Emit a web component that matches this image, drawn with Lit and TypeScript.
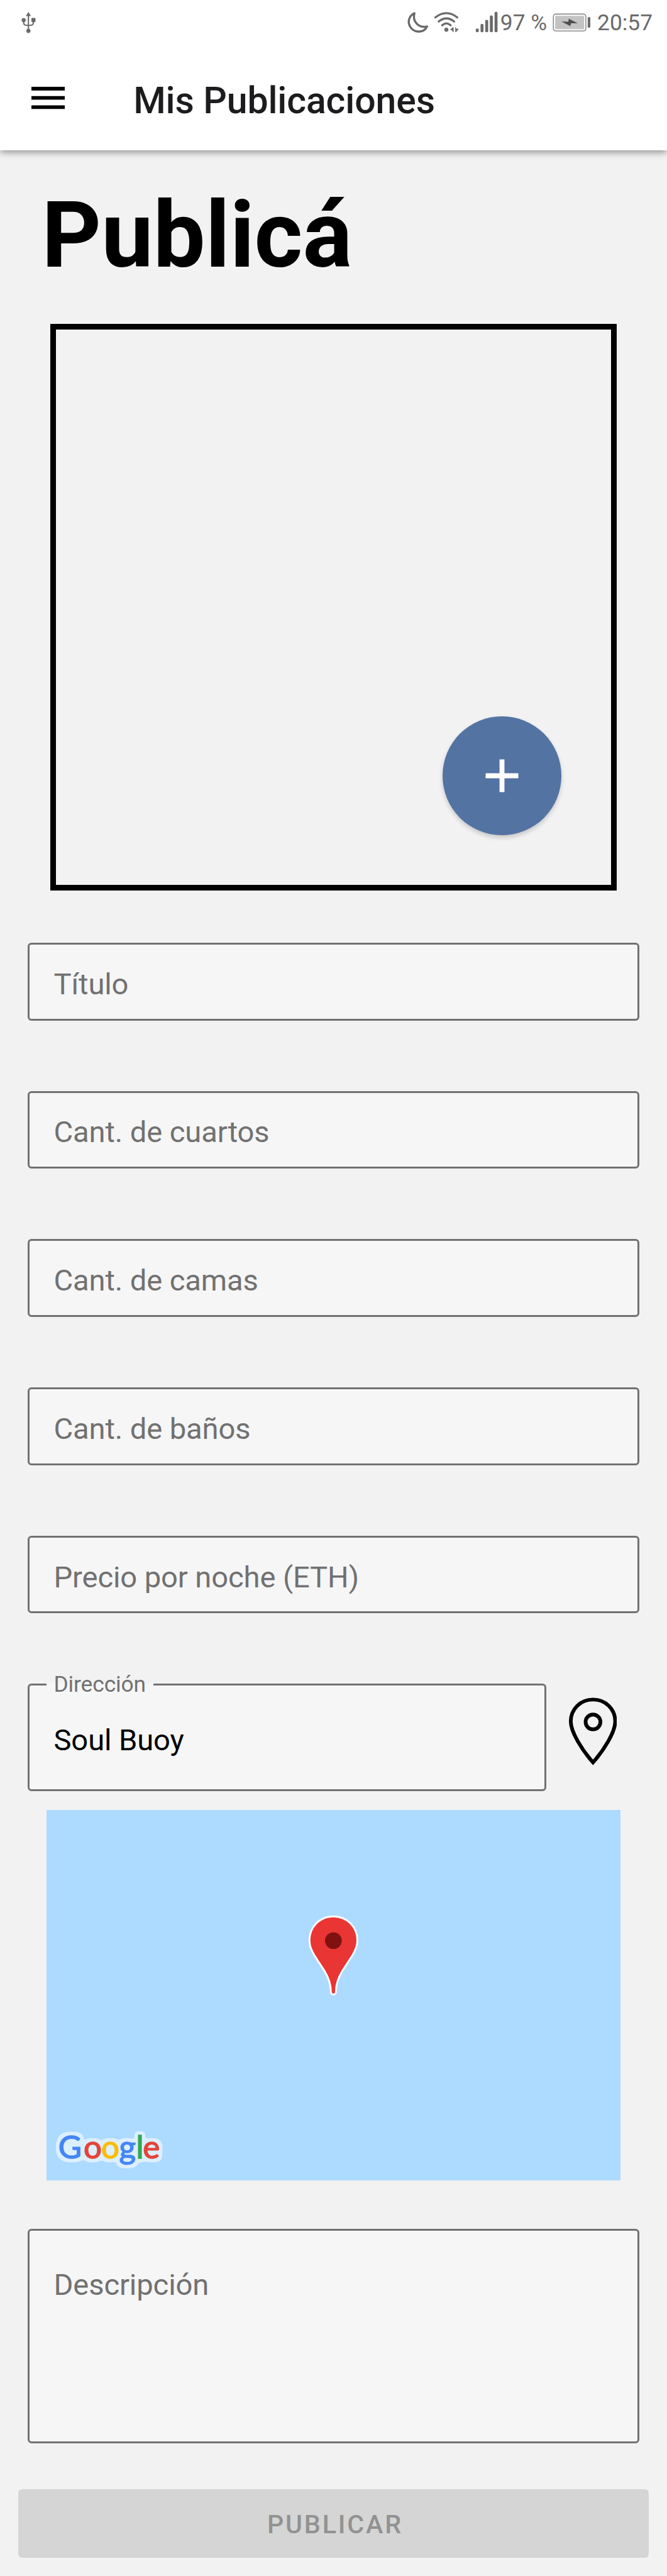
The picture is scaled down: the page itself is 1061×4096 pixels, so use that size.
import { LitElement, html, css, svg } from "lit";
import { customElement, property } from "lit/decorators.js";

/** Text field with an outline; shows its label as a hint, or floated once filled. */
@customElement("outlined-field")
class OutlinedField extends LitElement {
  @property() label = "";
  @property() value = "";

  static styles = css`
    :host {
      display: block;
      box-sizing: border-box;
      border: 3px solid #717171;
      border-radius: 6px;
      background: #f6f6f6;
      color: #717171;
      font-size: calc(48 * var(--u));
      line-height: calc(56 * var(--u));
      letter-spacing: -0.1px;
      padding: calc(36.5 * var(--u)) calc(39 * var(--u)) 0;
      height: calc(126 * var(--u));
    }
    .value {
      color: #000;
      padding-top: calc(24 * var(--u));
    }
    .floating {
      position: absolute;
      left: calc(27 * var(--u));
      top: calc(-22.5 * var(--u));
      padding: 0 calc(12 * var(--u));
      width: calc(149 * var(--u));
      font-size: calc(36 * var(--u));
      line-height: calc(42 * var(--u));
      white-space: nowrap;
      background: linear-gradient(#f2f2f2 42%, #f6f6f6 42%);
    }
  `;

  render() {
    return this.value
      ? html`<div class="floating">${this.label}</div>
          <div class="value">${this.value}</div>`
      : html`<div>${this.label}</div>`;
  }
}

@customElement("status-bar")
class StatusBar extends LitElement {
  static styles = css`
    :host {
      display: flex;
      align-items: center;
      height: calc(72 * var(--u));
      padding: 0 calc(23 * var(--u)) 0 calc(30 * var(--u));
      color: #6a6a6a;
      font-size: calc(36 * var(--u));
      line-height: calc(42 * var(--u));
    }
    svg {
      display: block;
      flex: none;
      height: calc(72 * var(--u));
    }
    .usb {
      width: calc(33 * var(--u));
      margin-right: auto;
    }
    .signals {
      width: calc(155 * var(--u));
    }
    .battery {
      width: calc(78 * var(--u));
    }
    .percent,
    .clock {
      flex: none;
      padding-top: calc(2 * var(--u));
      white-space: nowrap;
    }
    .percent {
      width: calc(79 * var(--u));
    }
    .clock {
      width: calc(90 * var(--u));
    }
  `;

  render() {
    const bars = [
      [772.3, 46],
      [780, 38.7],
      [787.6, 32],
      [795.1, 25],
      [802.7, 19],
    ];
    return html`
      <svg class="usb" viewBox="30 0 33 72" fill="#6a6a6a">
        <path d="M46.5 19.3 L50.7 26 H42.3 Z" />
        <circle cx="38.8" cy="32.5" r="3.3" />
        <rect x="51.3" y="29" width="6.7" height="6.8" rx="1.4" />
        <circle cx="46.5" cy="50" r="3.4" />
        <path
          d="M46.5 25 V48 M38.8 34 V36.5 Q38.8 41 43 41 H50 Q54.5 41 54.5 36.5 V34"
          fill="none"
          stroke="#6a6a6a"
          stroke-width="2.1"
        />
      </svg>
      <svg class="signals" viewBox="655 0 155 72" fill="#6a6a6a">
        <path
          d="M670.5 21.3 C662 25 659 35 663.2 42.5 C669 53.5 685.5 54.5 691 42.8 C677 46 667 35 670.5 21.3 Z"
          fill="none"
          stroke="#6a6a6a"
          stroke-width="3.4"
          stroke-linejoin="round"
        />
        <g fill="none" stroke="#6a6a6a" stroke-width="3.3" stroke-linecap="round">
          <path d="M704.3 28.3 Q722.3 14.3 740 28.3" />
          <path d="M709.8 34.8 Q722.3 24.8 734.8 34.8" />
          <path d="M715.3 41 Q722.3 34.6 729.2 41" />
        </g>
        <circle cx="722.2" cy="48" r="3.3" />
        <path d="M734 44.3 V52 H732.3 V49.8 L728.3 48 L732.3 44.3 Z M736.6 44.3 H738 V46.3 L742.2 46.5 L738.4 51.6 H736.6 Z" />
        ${bars.map(
          ([x, y]) => svg`<rect x=${x - 2.4} y=${y} width="4.8" height=${52.3 - y} rx="2.1"></rect>`
        )}
      </svg>
      <span class="percent">97 %</span>
      <svg class="battery" viewBox="889 0 78 72">
        <rect x="896.4" y="22.8" width="52.6" height="27.4" rx="4" fill="#fff" stroke="#8a8a8a" stroke-width="1.6" />
        <rect x="899.3" y="25.6" width="47" height="21.8" rx="1" fill="#c3c3c3" />
        <path d="M909.5 35 L920.7 35.2 L921.3 30.4 L935.7 37.8 L924.8 37.6 L924 42.3 Z" fill="#4c4c4c" />
        <rect x="952" y="27.5" width="4.2" height="17.6" rx="2" fill="#6a6a6a" />
      </svg>
      <span class="clock">20:57</span>
    `;
  }
}

@customElement("map-preview")
class MapPreview extends LitElement {
  static styles = css`
    :host {
      display: grid;
      background: #addaff;
      height: calc(600 * var(--u));
    }
    svg {
      display: block;
      width: 100%;
      height: 100%;
    }
    .logo {
      font-family: Lato, "Open Sans", sans-serif;
      font-size: 52px;
      font-weight: 400;
      stroke-width: 1.5px;
    }
    .blue {
      fill: #4486f5;
      stroke: #4486f5;
    }
    .red {
      fill: #e44539;
      stroke: #e44539;
    }
    .yellow {
      fill: #fbbc09;
      stroke: #fbbc09;
    }
    .green {
      fill: #34a753;
      stroke: #34a753;
    }
  `;

  render() {
    const letters: [string, number, string][] = [
      ["G", 94, "blue"],
      ["o", 135, "red"],
      ["o", 163.5, "yellow"],
      ["g", 192.5, "blue"],
      ["l", 220, "green"],
      ["e", 231, "red"],
    ];
    return html`
      <svg viewBox="75 2930 930 600" preserveAspectRatio="none">
        <filter
          id="halo"
          filterUnits="userSpaceOnUse"
          x="80"
          y="3435"
          width="200"
          height="90"
          color-interpolation-filters="sRGB"
        >
          <feMorphology in="SourceAlpha" operator="dilate" radius="4" />
          <feGaussianBlur stdDeviation="2.5" />
          <feComponentTransfer result="edge"><feFuncA type="linear" slope="6" intercept="-1.2" /></feComponentTransfer>
          <feFlood flood-color="#dceffe" />
          <feComposite operator="in" in2="edge" />
          <feMerge>
            <feMergeNode />
            <feMergeNode in="SourceGraphic" />
          </feMerge>
        </filter>
        <path
          d="M539.5 3102.3 C561.5 3102.3 578.3 3119.5 578.3 3141 C578.3 3151 575 3157.5 570.5 3165 L554 3190.5 C547 3202 543.6 3212 543.6 3224.5 A4.1 4.1 0 0 1 535.4 3224.5 C535.4 3212 532 3202 525 3190.5 L508.5 3165 C504 3157.5 500.7 3151 500.7 3141 C500.7 3119.5 517.5 3102.3 539.5 3102.3 Z"
          fill="#ea3535"
          stroke="#fff"
          stroke-width="3"
        />
        <circle cx="539.5" cy="3141.5" r="13.6" fill="#811111" />
        <g class="logo" filter="url(#halo)">
          ${letters.map(([c, x, k]) => svg`<text class=${k} x=${x} y="3494">${c}</text>`)}
        </g>
      </svg>
    `;
  }
}

@customElement("app-root")
class AppRoot extends LitElement {
  static styles = css`
    :host {
      --u: 0.9822px;
      display: flex;
      flex-direction: column;
      box-sizing: border-box;
      height: 4096px;
      overflow: hidden;
      background: #f2f2f2;
      font-family: Roboto, "Liberation Sans", sans-serif;
    }
    header {
      flex: none;
      height: calc(243 * var(--u));
      background: #fff;
      box-shadow: 0 3px 11px rgba(0, 0, 0, 0.42);
    }
    .toolbar {
      display: flex;
      align-items: center;
      height: calc(171 * var(--u));
      padding-left: calc(51 * var(--u));
      box-sizing: border-box;
    }
    .menu {
      width: calc(54 * var(--u));
      height: calc(36 * var(--u));
      margin: calc(3 * var(--u)) calc(111 * var(--u)) 0 0;
    }
    .toolbar h1 {
      margin: calc(11 * var(--u)) 0 0;
      color: #1c1c1e;
      font-size: calc(60 * var(--u));
      line-height: calc(70 * var(--u));
      letter-spacing: -0.1px;
      font-weight: 500;
    }
    h2 {
      flex: none;
      margin: calc(50 * var(--u)) 0 0 calc(67.5 * var(--u));
      font-size: calc(150 * var(--u));
      line-height: calc(176 * var(--u));
      font-weight: 700;
      color: #000;
    }
    .photo {
      flex: none;
      display: flex;
      justify-content: flex-end;
      align-items: flex-end;
      box-sizing: border-box;
      width: calc(918 * var(--u));
      height: calc(918 * var(--u));
      margin: calc(55 * var(--u)) 0 0 calc(81 * var(--u));
      border: 9px solid #000;
      padding: 0 calc(81 * var(--u)) calc(81 * var(--u)) 0;
    }
    .add {
      display: grid;
      place-items: center;
      width: calc(192 * var(--u));
      height: calc(192 * var(--u));
      border-radius: 50%;
      background: #5373a3;
      box-shadow: 0 4px 7px rgba(0, 0, 0, 0.18);
    }
    .add svg {
      width: calc(54 * var(--u));
      height: calc(54 * var(--u));
    }
    form {
      flex: none;
      display: grid;
      row-gap: calc(114 * var(--u));
      margin: calc(84 * var(--u)) calc(45 * var(--u)) 0;
    }
    .address {
      display: flex;
    }
    .address outlined-field {
      position: relative;
      width: calc(840 * var(--u));
      height: calc(174 * var(--u));
    }
    .pin {
      width: calc(78 * var(--u));
      height: calc(112 * var(--u));
      margin: calc(21 * var(--u)) 0 0 calc(36 * var(--u));
    }
    map-preview {
      flex: none;
      margin: calc(30 * var(--u)) calc(75 * var(--u)) 0;
    }
    .description {
      flex: none;
      height: calc(347 * var(--u));
      margin: calc(78 * var(--u)) calc(45 * var(--u)) 0;
      padding-top: calc(60.5 * var(--u));
    }
    .publish {
      flex: none;
      display: grid;
      place-items: center;
      box-sizing: border-box;
      height: calc(111 * var(--u));
      margin: calc(75 * var(--u)) calc(30 * var(--u)) 0;
      padding: calc(4 * var(--u)) 0 0 calc(5 * var(--u));
      border-radius: 6px;
      background: #d5d5d5;
      color: #929292;
      font-size: calc(42 * var(--u));
      font-weight: 500;
      letter-spacing: 0.068em;
      line-height: calc(50 * var(--u));
    }
  `;

  render() {
    return html`
      <header>
        <status-bar></status-bar>
        <div class="toolbar">
          <svg class="menu" viewBox="0 0 54 36">
            <path d="M0 0H54V6H0Z M0 15H54V21H0Z M0 30H54V36H0Z" />
          </svg>
          <h1>Mis Publicaciones</h1>
        </div>
      </header>
      <h2>Publicá</h2>
      <div class="photo">
        <div class="add">
          <svg viewBox="0 0 54 54">
            <path d="M23 0.5H31V23H53.5V31H31V53.5H23V31H0.5V23H23Z" fill="#fff" />
          </svg>
        </div>
      </div>
      <form>
        <outlined-field label="Título"></outlined-field>
        <outlined-field label="Cant. de cuartos"></outlined-field>
        <outlined-field label="Cant. de camas"></outlined-field>
        <outlined-field label="Cant. de baños"></outlined-field>
        <outlined-field label="Precio por noche (ETH)"></outlined-field>
        <div class="address">
          <outlined-field label="Dirección" value="Soul Buoy"></outlined-field>
          <svg class="pin" viewBox="921 2747 78 112" fill="none" stroke="#000" stroke-width="6">
            <path
              d="M960 2751.5 C939.5 2751.5 924 2767 924 2787 C924 2804 942 2833 960 2853.3 C978 2833 996 2804 996 2787 C996 2767 980.5 2751.5 960 2751.5 Z"
            />
            <circle cx="960" cy="2787.7" r="12" />
          </svg>
        </div>
      </form>
      <map-preview></map-preview>
      <outlined-field class="description" label="Descripción"></outlined-field>
      <div class="publish">PUBLICAR</div>
    `;
  }
}
